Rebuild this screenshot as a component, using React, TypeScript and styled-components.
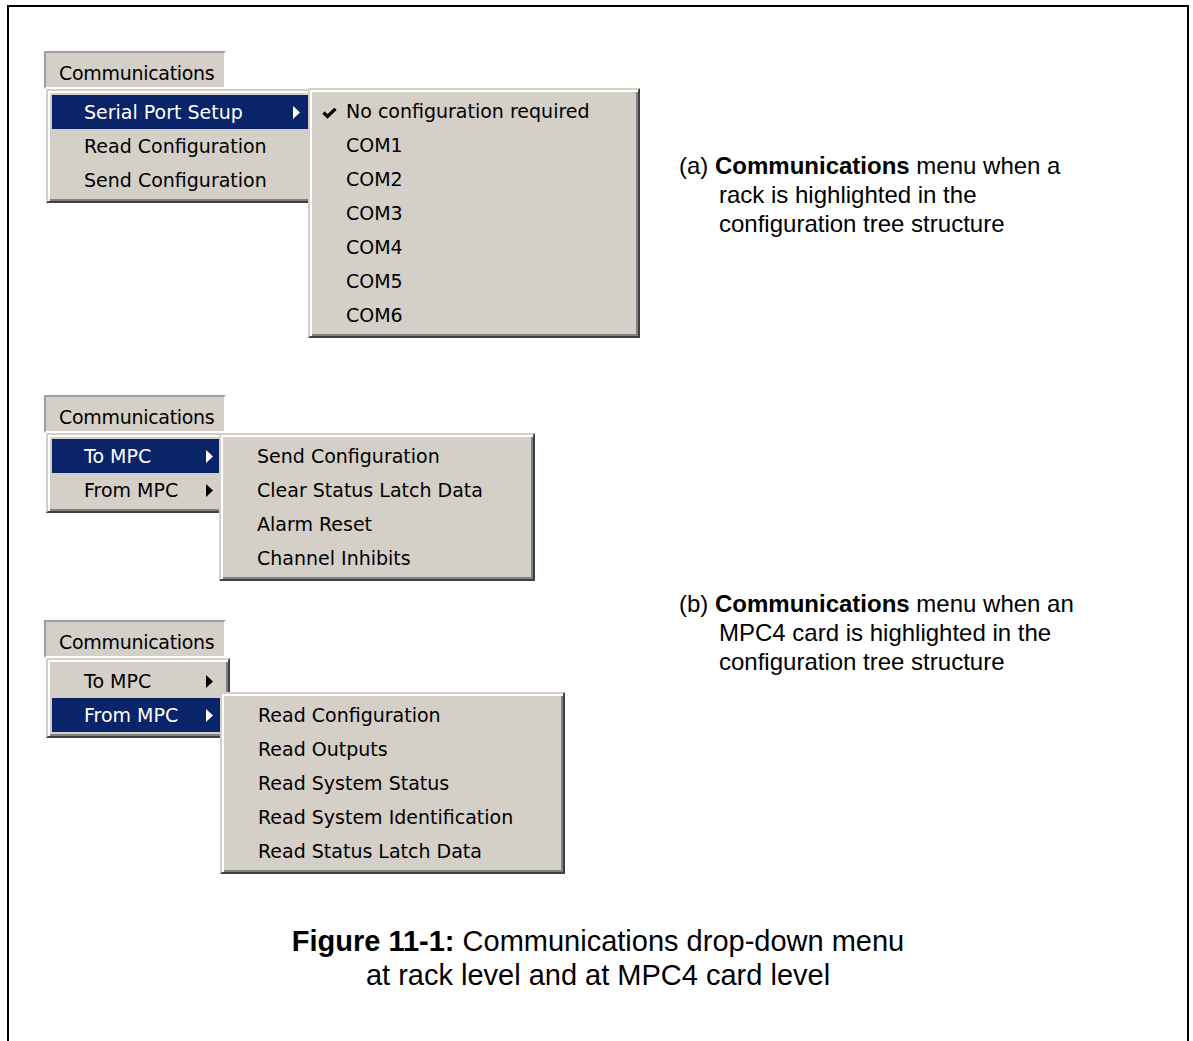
import React from "react";
import styled, { createGlobalStyle } from "styled-components";

const GlobalStyle = createGlobalStyle`
  html, body {
    margin: 0;
    padding: 0;
    background: #fff;
    overflow: hidden;
  }
`;

const Frame = styled.div`
  box-sizing: border-box;
  width: 1182px;
  height: 1080px;
  margin: 5px 0 0 7px;
  padding-top: 44px;
  border: 2px solid #000;
  background: #fff;
`;

const Section = styled.div<{ $gap?: number }>`
  display: grid;
  grid-template-columns: 635px 1fr;
  align-items: start;
  padding-left: 35px;
  margin-top: ${(p) => p.$gap ?? 0}px;
`;

const MenuColumn = styled.div`
  display: flex;
  flex-direction: column;
  align-items: flex-start;
`;

const MenuGroup = styled.div<{ $gap?: number }>`
  margin-top: ${(p) => p.$gap ?? 0}px;
`;

// pressed item of the menu bar
const MenuBarItem = styled.div`
  box-sizing: border-box;
  width: 182px;
  height: 38px;
  padding-left: 13px;
  overflow: hidden;
  border: 2px solid;
  border-color: #a09e98 #fff #fff #a09e98;
  background: #d4d0c8;
  color: #000;
  font: 19px/40px "DejaVu Sans", Verdana, sans-serif;
  letter-spacing: -0.3px;
`;

const MenuRow = styled.div`
  display: flex;
  align-items: flex-start;
  margin-left: 2px;
`;

const Menu = styled.div<{ $width: number; $top?: number; $left?: number }>`
  box-sizing: border-box;
  flex: none;
  width: ${(p) => p.$width}px;
  margin: ${(p) => p.$top ?? 0}px 0 0 ${(p) => p.$left ?? 0}px;
  padding: 4px;
  border: 2px solid;
  border-color: #d4d0c8 #404040 #404040 #d4d0c8;
  box-shadow: inset 2px 2px #fff, inset -2px -2px #808080;
  background: #d4d0c8;
`;

const Item = styled.div<{ $active?: boolean }>`
  display: flex;
  align-items: center;
  height: 34px;
  background: ${(p) => (p.$active ? "#0a246a" : "transparent")};
  color: ${(p) => (p.$active ? "#fff" : "#000")};
  font: 19px "DejaVu Sans", Verdana, sans-serif;
  white-space: nowrap;
`;

const Gutter = styled.span`
  box-sizing: border-box;
  flex: none;
  display: flex;
  align-items: center;
  width: 32px;
  padding: 4px 0 0 8px;
`;

const Label = styled.span`
  flex: 1;
`;

const Arrow = styled.svg`
  flex: none;
  margin-right: 11px;
`;

const Caption = styled.p<{ $top: number }>`
  margin: ${(p) => p.$top}px 0 0;
  padding-left: 40px;
  text-indent: -40px;
  color: #000;
  font-family: "Liberation Sans", Arial, sans-serif;
  font-size: 24px;
  line-height: 29px;
  white-space: nowrap;
`;

const FigureCaption = styled.p`
  margin: 50px 0 0;
  text-align: center;
  color: #000;
  font-family: "Liberation Sans", Arial, sans-serif;
  font-size: 29px;
  line-height: 34px;
`;

type Entry = { label: string; active?: boolean; sub?: boolean; checked?: boolean };

const Check = () => (
  <svg width="15" height="11" viewBox="0 0 15 11">
    <path d="M1.5 4.5 L5.5 8.5 L13.5 0.8" fill="none" stroke="#000" strokeWidth="3.2" />
  </svg>
);

const SubArrow = () => (
  <Arrow width="7" height="13" viewBox="0 0 7 13">
    <polygon points="0,0 7,6.5 0,13" fill="currentColor" />
  </Arrow>
);

const MenuList = ({
  items,
  width,
  top,
  left,
}: {
  items: Entry[];
  width: number;
  top?: number;
  left?: number;
}) => (
  <Menu $width={width} $top={top} $left={left}>
    {items.map((it) => (
      <Item key={it.label} $active={it.active}>
        <Gutter>{it.checked && <Check />}</Gutter>
        <Label>{it.label}</Label>
        {it.sub && <SubArrow />}
      </Item>
    ))}
  </Menu>
);

const rackMenu: Entry[] = [
  { label: "Serial Port Setup", active: true, sub: true },
  { label: "Read Configuration" },
  { label: "Send Configuration" },
];

const ports: Entry[] = [
  { label: "No configuration required", checked: true },
  { label: "COM1" },
  { label: "COM2" },
  { label: "COM3" },
  { label: "COM4" },
  { label: "COM5" },
  { label: "COM6" },
];

const toMpc: Entry[] = [
  { label: "Send Configuration" },
  { label: "Clear Status Latch Data" },
  { label: "Alarm Reset" },
  { label: "Channel Inhibits" },
];

const fromMpc: Entry[] = [
  { label: "Read Configuration" },
  { label: "Read Outputs" },
  { label: "Read System Status" },
  { label: "Read System Identification" },
  { label: "Read Status Latch Data" },
];

export default function App() {
  return (
    <>
      <GlobalStyle />
      <Frame>
        <Section>
          <MenuColumn>
            <MenuBarItem>Communications</MenuBarItem>
            <MenuRow>
              <MenuList items={rackMenu} width={271} />
              <MenuList items={ports} width={332} top={-1} left={-9} />
            </MenuRow>
          </MenuColumn>
          <Caption $top={100}>
            (a) <b>Communications</b> menu when a
            <br />
            rack is highlighted in the
            <br />
            configuration tree structure
          </Caption>
        </Section>

        <Section $gap={57}>
          <MenuColumn>
            <MenuGroup>
              <MenuBarItem>Communications</MenuBarItem>
              <MenuRow>
                <MenuList
                  items={[
                    { label: "To MPC", active: true, sub: true },
                    { label: "From MPC", sub: true },
                  ]}
                  width={184}
                />
                <MenuList items={toMpc} width={316} left={-11} />
              </MenuRow>
            </MenuGroup>
            <MenuGroup $gap={39}>
              <MenuBarItem>Communications</MenuBarItem>
              <MenuRow>
                <MenuList
                  items={[
                    { label: "To MPC", sub: true },
                    { label: "From MPC", active: true, sub: true },
                  ]}
                  width={184}
                />
                <MenuList items={fromMpc} width={345} top={34} left={-10} />
              </MenuRow>
            </MenuGroup>
          </MenuColumn>
          <Caption $top={194}>
            (b) <b>Communications</b> menu when an
            <br />
            MPC4 card is highlighted in the
            <br />
            configuration tree structure
          </Caption>
        </Section>

        <FigureCaption>
          <b>Figure 11-1:</b> Communications drop-down menu
          <br />
          at rack level and at MPC4 card level
        </FigureCaption>
      </Frame>
    </>
  );
}
